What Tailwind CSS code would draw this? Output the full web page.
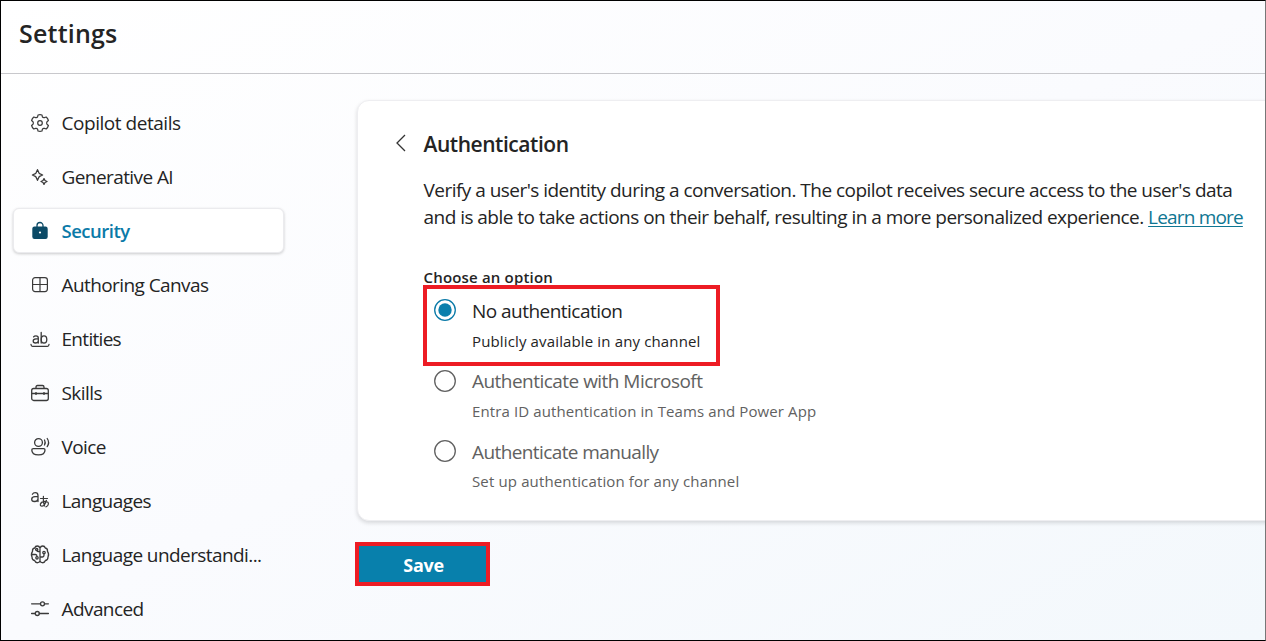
<!DOCTYPE html>
<html lang="en">
<head>
<meta charset="utf-8">
<title>Settings</title>
<script src="https://cdn.jsdelivr.net/npm/@tailwindcss/browser@4"></script>
</head>
<body class="w-[1266px] h-[641px] overflow-hidden font-['Open_Sans','Noto_Sans',sans-serif] text-[#242424]">
<div class="w-[1266px] h-[641px] overflow-hidden border border-black border-r-[#777] bg-linear-to-br from-white via-[#fafbfe] to-[#f3f8fc] flex flex-col">
  <header class="h-[73px] shrink-0 border-b border-[#c8c8cc] pl-[18px] pt-[15px]">
    <h1 class="text-[25px] leading-[34px] font-semibold tracking-[0.2px] whitespace-nowrap">Settings</h1>
  </header>
  <div class="flex flex-1 min-h-0">
    <nav class="w-[283px] shrink-0 pt-[26px] pl-[11px] flex flex-col gap-2 text-[19px] tracking-[-0.58px] whitespace-nowrap">
      <a class="h-[46px] shrink-0 flex items-center pl-[17px] gap-[10.5px]">
        <svg class="size-[22px]" viewBox="0 0 22 22" fill="none" stroke="#3a3a3a" stroke-width="1.2" stroke-linejoin="round"><circle cx="11" cy="11" r="2.300"/><path transform="translate(0 .5)" d="M9 2.500Q11 1.700 13 2.500L13.400 4.400Q14 5.400 15.400 5.100L17.200 4.500Q18.900 6 19.400 8L18 9.300Q17.200 10.500 18 11.700L19.400 13Q18.900 15 17.200 16.500L15.400 15.900Q14 15.600 13.400 16.700L13 18.500Q11 19.300 9 18.500L8.600 16.700Q8 15.600 6.600 15.900L4.800 16.500Q3.100 15 2.600 13L4 11.700Q4.800 10.500 4 9.300L2.600 8Q3.100 6 4.800 4.500L6.600 5.100Q8 5.400 8.600 4.400Z"/></svg>
        <span class="tracking-[-0.46px]">Copilot details</span></a>
      <a class="h-[46px] shrink-0 flex items-center pl-[17px] gap-[10.5px]">
        <svg class="size-[22px]" viewBox="0 0 22 22" fill="none" stroke="#3a3a3a" stroke-width="1.3" stroke-linejoin="round"><path d="M8.500 3.700L9.900 6.800Q10.200 7.300 10.700 7.600L13.600 9L10.700 10.400Q10.200 10.700 9.900 11.200L8.500 14.300L7.100 11.200Q6.800 10.700 6.300 10.400L3.400 9L6.300 7.600Q6.800 7.300 7.100 6.800Z"/><path d="M15 12.600L16 14.500L18 15.500L16 16.500L15 18.400L14 16.500L12 15.500L14 14.500Z"/></svg>
        <span>Generative AI</span></a>
      <a class="h-[46px] shrink-0 flex items-start pl-px">
        <span class="w-[271px] h-[45px] rounded-md bg-white border border-[#ebebee] shadow-[0_1px_3px_rgba(0,0,0,0.2)] flex items-center pl-[15px] gap-[10.5px] text-[#0a7aa8] font-semibold text-[18.500px] tracking-[-0.5px]">
        <svg class="size-[22px]" viewBox="0 0 22 22"><path d="M8 7V5.500a3 3 0 0 1 6 0V7" fill="none" stroke="#0b4a66" stroke-width="1.300"/><rect x="3.300" y="6.500" width="15.400" height="12.500" rx="2.200" fill="#0b4a66"/><circle cx="11" cy="12.500" r="1.100" fill="#fff"/></svg>
        <span>Security</span></span></a>
      <a class="h-[46px] shrink-0 flex items-center pl-[17px] gap-[10.5px]">
        <svg class="size-[22px]" viewBox="0 0 22 22" fill="none" stroke="#3a3a3a" stroke-width="1.2"><rect x="3.600" y="3.600" width="14.800" height="14" rx="2.500"/><path d="M11 3.600v14M3.600 10.500h14.800"/></svg>
        <span>Authoring Canvas</span></a>
      <a class="h-[46px] shrink-0 flex items-center pl-[17px] gap-[10.5px]">
        <svg class="size-[22px]" viewBox="0 0 22 22" fill="none" stroke="#3a3a3a" stroke-width="1.3" stroke-linecap="round"><path d="M4.600 8.900Q5.300 7.800 7 7.800Q9.300 7.800 9.300 10V15M9.300 10.900H7Q4.200 11 4.200 13Q4.200 15 6.500 15Q8.700 15 9.300 13.200M12.200 4.500V15"/><ellipse cx="15" cy="11.400" rx="2.800" ry="3.600"/><path d="M2 16.500Q2.200 18.300 3.500 18.300H18.500Q19.800 18.300 20 16.500"/></svg>
        <span class="tracking-[-0.7px]">Entities</span></a>
      <a class="h-[46px] shrink-0 flex items-center pl-[17px] gap-[10.5px]">
        <svg class="size-[22px]" viewBox="0 0 22 22" fill="none" stroke="#3a3a3a" stroke-width="1.3"><rect x="2.700" y="6.500" width="16.600" height="12" rx="2"/><path d="M7 6.500V5Q7 3.500 8.500 3.500H13.500Q15 3.500 15 5V6.500M2.700 11.500H19.300M7 10V13M15 10V13"/></svg>
        <span>Skills</span></a>
      <a class="h-[46px] shrink-0 flex items-center pl-[17px] gap-[10.5px]">
        <svg class="size-[22px]" viewBox="0 0 22 22" fill="none" stroke="#3a3a3a" stroke-width="1.3" stroke-linecap="round"><circle cx="9.500" cy="6.500" r="3.900"/><path d="M4.300 12.700H14.700Q16 12.700 16 14Q16 18.900 9.500 18.900Q2.800 18.900 2.800 14Q2.800 12.700 4.300 12.700ZM15.500 4Q16.900 6.500 15.500 9M18.200 2.500Q21 6.500 18.200 10.600"/></svg>
        <span>Voice</span></a>
      <a class="h-[46px] shrink-0 flex items-center pl-[17px] gap-[10.5px]">
        <svg class="size-[22px]" viewBox="0 0 22 22" fill="none" stroke="#3a3a3a" stroke-width="1.3" stroke-linecap="round"><path d="M3.400 4.200Q4.300 2.600 6.200 2.600Q9 2.600 9 5.400V11.500M9 6.700H6Q2.700 6.900 2.700 9.200Q2.700 11.500 5.400 11.500Q8 11.500 9 9.200"/><path d="M11.500 8.500H18.500M14.400 6.300Q13.800 12 15.500 16M17.400 10.300Q16 15.600 13 16.200Q11 16.200 11.400 14Q12.300 11.600 16 11.400Q19.500 11.500 19.400 14Q19.100 16.300 16.900 16.800" stroke-width="1.200"/></svg>
        <span>Languages</span></a>
      <a class="h-[46px] shrink-0 flex items-center pl-[17px] gap-[10.5px]">
        <svg class="size-[22px]" viewBox="0 0 22 22" fill="none" stroke="#3a3a3a" stroke-width="1.300" stroke-linecap="round"><path d="M11 4Q10.200 2 8.300 2Q6.300 2 5.700 4Q3.200 4.400 3.500 7.300Q1.600 10 3 13Q2.900 16 5.600 16.500Q6.500 19 8.700 18.700Q10.300 18.500 11 17M11 4Q11.800 2 13.700 2Q15.700 2 16.300 4Q18.800 4.400 18.500 7.300Q20.400 10 19 13Q19.100 16 16.400 16.500Q15.500 19 13.300 18.700Q11.700 18.500 11 17V4M11 7.500H9Q8 7.500 8 6.300M3.200 10.500H6.500Q8 10.500 8 12.500M11 13H13.500Q15 13 15 11.200V9.800"/><circle cx="7.700" cy="5.400" r="1.100"/><circle cx="8" cy="13.800" r="1.200"/><circle cx="15" cy="8.500" r="1.200"/></svg>
        <span>Language understandi...</span></a>
      <a class="h-[46px] shrink-0 flex items-center pl-[17px] gap-[10.5px]">
        <svg class="size-[22px]" viewBox="0 0 22 22" fill="none" stroke="#3a3a3a" stroke-width="1.3" stroke-linecap="round"><circle cx="13.500" cy="5.800" r="2"/><circle cx="8.300" cy="15.500" r="2"/><path d="M2.600 5.800H11.500M15.500 5.800H19.400M2.600 15.500H6.300M10.300 15.500H19.400"/></svg>
        <span>Advanced</span></a>
    </nav>
    <main class="flex-1 min-w-0 pl-[73px] pt-[26px] whitespace-nowrap">
      <section class="w-[930px] h-[421px] bg-white rounded-[12px] border border-[#eeeef1] shadow-[0_2px_4px_rgba(0,0,0,0.14)] pl-[65.5px] pt-[29px]">
        <div class="relative h-[28px]">
          <svg class="absolute left-[-31px] top-[4px] w-[16px] h-[18px]" viewBox="0 0 16 18" fill="none" stroke="#333" stroke-width="1.300"><path d="M12 1L4 9L12 17"/></svg>
          <h2 class="text-[21px] leading-[28px] font-semibold tracking-[-0.45px]">Authentication</h2>
        </div>
        <div class="mt-[19px] text-[19px] leading-[27px] tracking-[-0.53px]">
          <p>Verify a user's identity during a conversation. The copilot receives secure access to the user's data</p>
          <p>and is able to take actions on their behalf, resulting in a more personalized experience. <a class="text-[#0f7692] underline decoration-1 underline-offset-[2px] tracking-[-0.82px]">Learn more</a></p>
        </div>
        <div class="mt-[35px] text-[15px] leading-[22px] font-semibold tracking-[0.18px]">Choose an option</div>
        <div class="ml-[-0.5px] -mt-[3px] w-[297px] h-[81px] border-4 border-[#ed1c24] flex pl-[7px] pt-[10px] gap-4 relative">
          <svg class="size-[22px] shrink-0" viewBox="0 0 22 22"><circle cx="11" cy="11" r="10.300" fill="#fff" stroke="#0a7aa8" stroke-width="1.300"/><circle cx="11" cy="11" r="6.700" fill="#0a7fac"/></svg>
          <div><div class="text-[19px] leading-[26px] -mt-px tracking-[-0.53px]">No authentication</div><div class="mt-[6px] text-[15px] leading-[22px] tracking-[0.14px]">Publicly available in any channel</div></div>
        </div>
        <div class="pl-[10.5px] mt-[4px] flex gap-4 h-[70px] text-[#616161]">
          <svg class="size-[22px] shrink-0" viewBox="0 0 22 22"><circle cx="11" cy="11" r="10.300" fill="#fff" stroke="#616161" stroke-width="1.300"/></svg>
          <div><div class="text-[19px] leading-[26px] -mt-[2px] tracking-[-0.53px]">Authenticate with Microsoft</div><div class="mt-[6px] text-[15px] leading-[22px] tracking-[0.11px]">Entra ID authentication in Teams and Power App</div></div>
        </div>
        <div class="pl-[10.5px] flex gap-4 text-[#616161]">
          <svg class="size-[22px] shrink-0" viewBox="0 0 22 22"><circle cx="11" cy="11" r="10.300" fill="#fff" stroke="#616161" stroke-width="1.300"/></svg>
          <div><div class="text-[19px] leading-[26px] -mt-[1px] tracking-[-0.6px]">Authenticate manually</div><div class="mt-[5px] text-[15px] leading-[22px] tracking-[0.14px]">Set up authentication for any channel</div></div>
        </div>
      </section>
      <button class="ml-[-2px] mt-[21px] w-[135px] h-[44px] flex justify-center pl-[2px] pt-px border-4 border-[#ed1c24] bg-[#0880ac] text-white text-[18px] leading-[36px] font-bold tracking-[-0.300px]">Save</button>
    </main>
  </div>
</div>
</body>
</html>
